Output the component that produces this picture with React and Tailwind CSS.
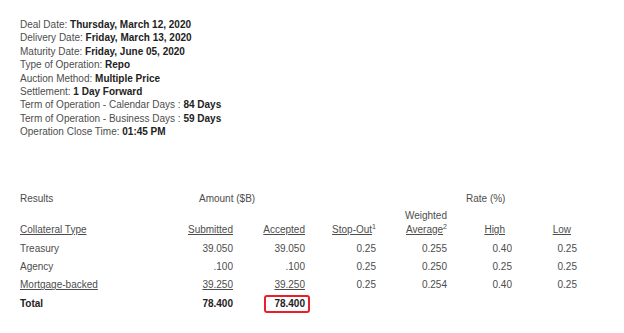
import React from 'react';

const details = [
  ['Deal Date: ', 'Thursday, March 12, 2020'],
  ['Delivery Date: ', 'Friday, March 13, 2020'],
  ['Maturity Date: ', 'Friday, June 05, 2020'],
  ['Type of Operation: ', 'Repo'],
  ['Auction Method: ', 'Multiple Price'],
  ['Settlement: ', '1 Day Forward'],
  ['Term of Operation - Calendar Days : ', '84 Days'],
  ['Term of Operation - Business Days : ', '59 Days'],
  ['Operation Close Time: ', '01:45 PM'],
];

const rows = [
  { type: 'Treasury', sub: '39.050', acc: '39.050', stop: '0.25', avg: '0.255', high: '0.40', low: '0.25' },
  { type: 'Agency', sub: '.100', acc: '.100', stop: '0.25', avg: '0.250', high: '0.25', low: '0.25' },
  { type: 'Mortgage-backed', sub: '39.250', acc: '39.250', stop: '0.25', avg: '0.254', high: '0.40', low: '0.25', link: true },
];

const grid = 'grid grid-cols-[150px_63px_72px_71px_71px_65px_65px]';

const App = () => {
  return (
    <div
      className="w-[624px] h-[333px] bg-white text-[10px] text-[#4d4d4d] px-5 pt-[18px]"
      style={{ fontFamily: '"Liberation Sans", Arial, sans-serif' }}
    >
      <div className="leading-[13.4px]">
        {details.map(([label, value]) => (
          <div key={label}>
            {label}
            <span className="font-bold text-[#222]">{value}</span>
          </div>
        ))}
      </div>

      <div className={`${grid} leading-[13px] mt-[53px]`}>
        <div>Results</div>
        <div className="col-span-2 pl-[29px]">Amount ($B)</div>
        <div></div>
        <div className="col-span-3 pl-[90px]">Rate (%)</div>
      </div>

      <div className={`${grid} leading-[14px] mt-[4px] items-end`}>
        <div className="underline">Collateral Type</div>
        <div className="text-right underline">Submitted</div>
        <div className="text-right underline">Accepted</div>
        <div className="text-right">
          <span className="underline">Stop-Out</span>
          <sup className="text-[7px]">1</sup>
        </div>
        <div className="text-right">
          <div>Weighted</div>
          <div>
            <span className="underline">Average</span>
            <sup className="text-[7px]">2</sup>
          </div>
        </div>
        <div className="text-right pr-[7px] underline">High</div>
        <div className="text-right pr-[6px] underline">Low</div>
      </div>

      <div className="mt-[3px] leading-[18.4px]">
        {rows.map((r) => (
          <div key={r.type} className={grid}>
            <div className={r.link ? 'underline' : ''}>{r.type}</div>
            <div className={`text-right ${r.link ? 'underline' : ''}`}>{r.sub}</div>
            <div className={`text-right ${r.link ? 'underline' : ''}`}>{r.acc}</div>
            <div className="text-right">{r.stop}</div>
            <div className="text-right">{r.avg}</div>
            <div className="text-right">{r.high}</div>
            <div className="text-right">{r.low}</div>
          </div>
        ))}
        <div className={`${grid} font-bold text-[#222]`}>
          <div>Total</div>
          <div className="text-right">78.400</div>
          <div className="text-right">
            <span className="inline-block border-2 border-[#e8202a] rounded-[3px] pl-[8px] pr-[3px] leading-[14px] mr-[-5px] align-middle">
              78.400
            </span>
          </div>
        </div>
      </div>
    </div>
  );
};

export default App;
